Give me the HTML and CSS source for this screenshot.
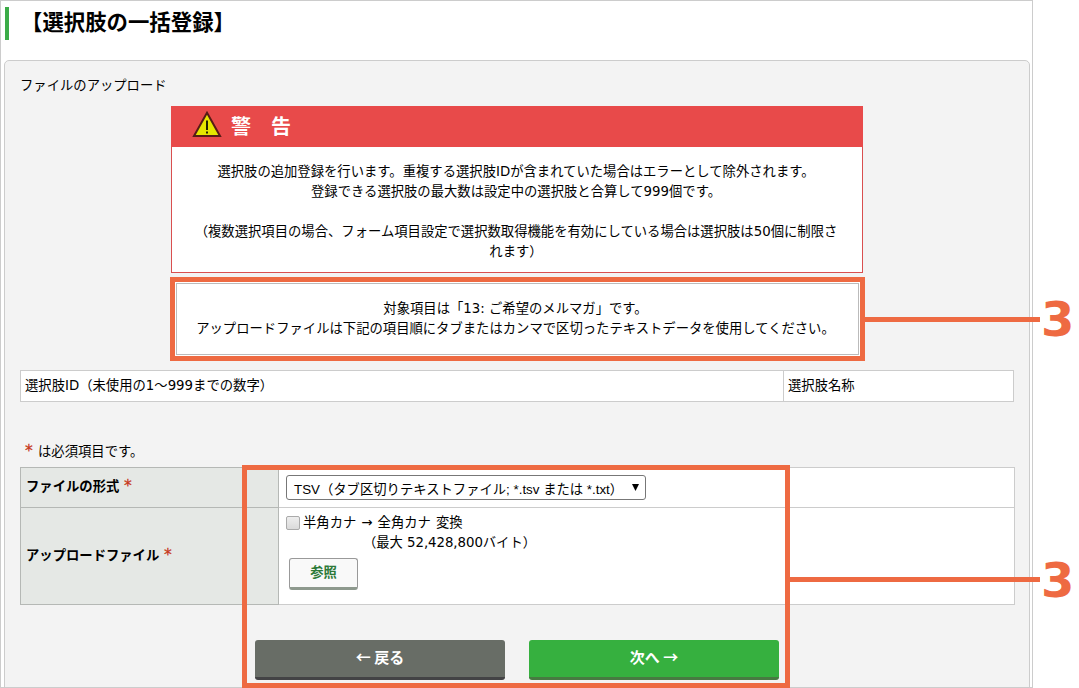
FILE: index.html
```
<!DOCTYPE html>
<html lang="ja">
<head>
    <meta charset="UTF-8">
    <title>選択肢の一括登録</title>
    <link rel="stylesheet" href="styles.css">
</head>
<body>
    <div id="page">
        <h1>【選択肢の一括登録】</h1>

        <div class="panel">
            <p class="lead">ファイルのアップロード</p>

            <div class="warning">
                <div class="warning-head">
                    <svg width="30" height="27" viewBox="0 0 30 27">
                        <path d="M15 1.8 L28 25 H2 Z" fill="#e6e600" stroke="#571c16" stroke-width="2"/>
                        <path d="M15 9.5 V19 M15 20.5 V22.5" fill="none" stroke="#222200" stroke-width="2"/>
                    </svg>
                    <h2>警　告</h2>
                </div>
                <div class="warning-body">
                    選択肢の追加登録を行います。重複する選択肢IDが含まれていた場合はエラーとして除外されます。<br>
                    登録できる選択肢の最大数は設定中の選択肢と合算して999個です。<br>
                    <br>
                    （複数選択項目の場合、フォーム項目設定で選択数取得機能を有効にしている場合は選択肢は50個に制限さ<br>
                    れます）
                </div>
            </div>

            <div class="notice">
                対象項目は「13: ご希望のメルマガ」です。<br>
                アップロードファイルは下記の項目順にタブまたはカンマで区切ったテキストデータを使用してください。
            </div>

            <table class="columns">
                <tr>
                    <td class="col-id">選択肢ID（未使用の1～999までの数字）</td>
                    <td>選択肢名称</td>
                </tr>
            </table>

            <p class="required-note"><span class="required">*</span> は必須項目です。</p>

            <table class="form">
                <tr class="row-type">
                    <th>ファイルの形式 <span class="required">*</span></th>
                    <td>
                        <div class="select"><span>TSV（タブ区切りテキストファイル; *.tsv または *.txt）</span><i class="arrow"></i></div>
                    </td>
                </tr>
                <tr class="row-file">
                    <th>アップロードファイル <span class="required">*</span></th>
                    <td>
                        <label class="check"><span class="box"></span><span>半角カナ → 全角カナ 変換</span></label>
                        <div class="limit">（最大 52,428,800バイト）</div>
                        <button class="browse">参照</button>
                    </td>
                </tr>
            </table>

            <div class="actions">
                <button class="btn back">← 戻る</button>
                <button class="btn next">次へ →</button>
            </div>
        </div>
    </div>

    <!-- step markers over the page -->
    <div class="mark mark-notice"></div>
    <div class="line line-notice"></div>
    <div class="num num-notice">3</div>
    <div class="mark mark-form"></div>
    <div class="line line-form"></div>
    <div class="num num-form">3</div>
</body>
</html>
```
FILE: styles.css
```
* {
    box-sizing: border-box;
}

body {
    margin: 0;
    height: 688px;
    overflow: hidden;
    position: relative;
    background: #fff;
    color: #000;
    font-family: "DejaVu Sans", "Noto Sans CJK JP", sans-serif;
    font-size: 13.33px;
    line-height: 20px;
    white-space: nowrap;
}

#page {
    width: 1033px;
    height: 688px;
    padding: 6px 2px 0 4px;
    border: 1px solid #ccc;
    overflow: hidden;
}

h1 {
    margin: 0 0 20px;
    height: 33px;
    padding-left: 12px;
    border-left: 4px solid #3bab47;
    font-family: "Noto Sans CJK JP", sans-serif;
    font-size: 21.4px;
    line-height: 28px;
}

.panel {
    height: 700px;
    margin-left: -1px;
    padding: 15px 14px 0 15px;
    background: #f3f3f3;
    border: 1px solid #ccc;
    border-radius: 5px;
}

p {
    margin: 0;
}

.warning {
    width: 692px;
    height: 167px;
    margin: 10px 0 0 151px;
    background: #fff;
    border: 1px solid #d94f4f;
    text-align: center;
}

.warning-head {
    display: flex;
    height: 41px;
    margin: -1px -1px 0;
    padding: 5px 0 0 21px;
    background: #e84a4a;
    color: #fff;
}

h2 {
    margin: 0 0 0 9px;
    font-size: 20px;
    line-height: 33px;
}

.warning-body {
    padding: 15px 2px 0 0;
}

.notice {
    width: 683px;
    height: 72px;
    margin: 10px 0 0 156px;
    padding: 15px 4px 0 0;
    background: #fff;
    border: 1px solid #bbb;
    box-shadow: 0 0 0 1px #fff;
    text-align: center;
}

table {
    border-collapse: collapse;
    table-layout: fixed;
    background: #fff;
}

td, th {
    border: 1px solid #ccc;
    text-align: left;
}

.columns {
    width: 994px;
    margin-top: 15px;
}

.columns td {
    height: 31px;
    padding: 0 4px;
}

.columns .col-id {
    width: 763px;
}

.required-note {
    margin: 40px 0 5px 5px;
    word-spacing: 1px;
}

.required {
    color: #c73a1d;
    font-size: 15.5px;
    line-height: 1;
    font-weight: normal;
    -webkit-text-stroke: 0.3px #c73a1d;
}

.form {
    width: 995px;
}

.form th {
    width: 258px;
    padding: 0 5px 1px;
    background: #e5e8e5;
    border-color: #b5b8b5;
}

.form td {
    padding: 0 7px;
    vertical-align: top;
}

.row-type {
    height: 40px;
}

.row-file {
    height: 97px;
}

.select {
    display: flex;
    justify-content: space-between;
    width: 360px;
    height: 25px;
    margin-top: 7px;
    padding: 4px 6px 0 7px;
    border: 1px solid #777;
    border-radius: 3px;
    font-family: "Liberation Sans", "Noto Sans CJK JP", sans-serif;
}

.arrow {
    width: 7px;
    height: 7px;
    margin-top: 4px;
    background: #000;
    clip-path: polygon(0 0, 100% 0, 50% 100%);
}

.check {
    display: flex;
    gap: 3px;
    margin-top: 5px;
    word-spacing: 0.8px;
}

.box {
    width: 14px;
    height: 14px;
    margin-top: 3px;
    border: 1px solid #aaa;
    border-radius: 2px;
    background: linear-gradient(#eee, #dadada);
}

.limit {
    padding-left: 77px;
    letter-spacing: -0.05px;
}

.browse {
    display: block;
    width: 69px;
    height: 32px;
    margin: 5px 0 0 3px;
    padding: 0 0 3px;
    background: #f9f9f9;
    border: 1px solid #999;
    border-bottom: 3px solid #8e998e;
    border-radius: 3px;
    color: #2d7a38;
    font: bold 13.33px "Noto Sans CJK JP", sans-serif;
}

.actions {
    display: flex;
    gap: 24px;
    margin: 35px 0 0 235px;
}

.btn {
    width: 250px;
    height: 40px;
    padding: 0 0 4px;
    border: 0;
    border-radius: 3px;
    color: #fff;
    font: bold 15px "Noto Sans CJK JP", sans-serif;
}

.back {
    background: #686d66;
    border-bottom: 3px solid #434345;
}

.next {
    background: #36b03f;
    border-bottom: 3px solid #477a41;
}

/* markers */
.mark {
    position: absolute;
    border: 5px solid #ee6a42;
}

.mark-notice {
    left: 170px;
    top: 277px;
    width: 695px;
    height: 84px;
}

.mark-form {
    left: 242px;
    top: 465px;
    width: 548px;
    height: 223px;
}

.line {
    position: absolute;
    height: 5px;
    background: #ee6a42;
}

.line-notice {
    left: 865px;
    top: 317px;
    width: 175px;
}

.line-form {
    left: 790px;
    top: 577px;
    width: 250px;
}

.num {
    position: absolute;
    left: 1041px;
    color: #ee6a42;
    font: bold 48px/48px "DejaVu Sans", sans-serif;
}

.num-notice {
    top: 295px;
}

.num-form {
    top: 556px;
}
```
